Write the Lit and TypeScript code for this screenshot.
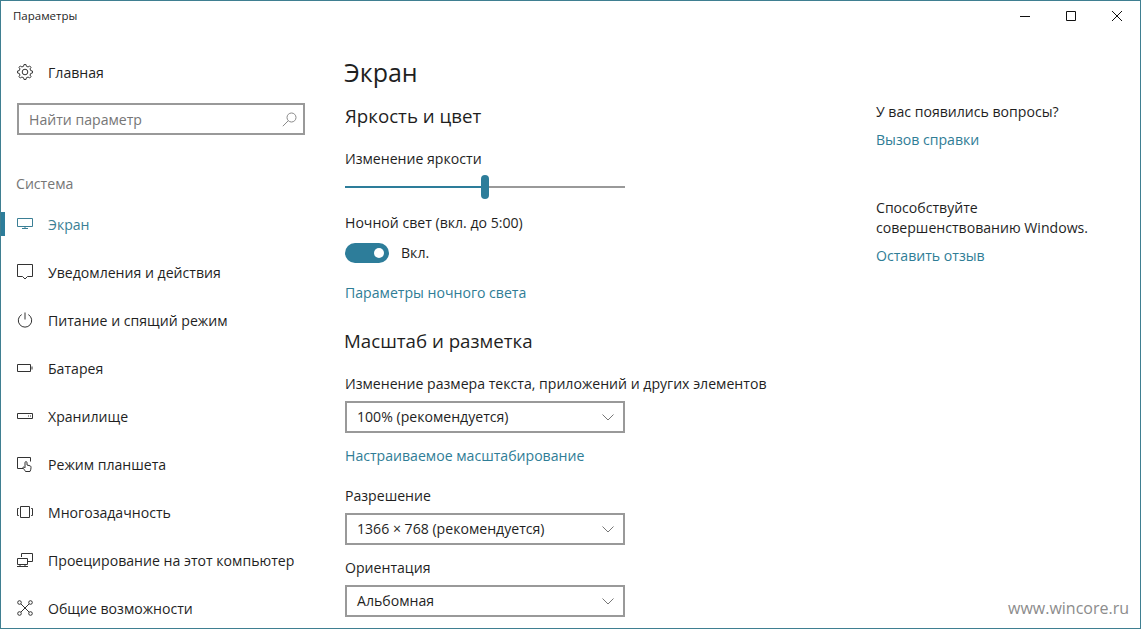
import { LitElement, html, css, svg } from "lit";
import { customElement } from "lit/decorators.js";

const ic = (content: unknown, cls = "") =>
  html`<svg class="icon ${cls}" viewBox="0 0 16 16" width="16" height="16">${content}</svg>`;

const gearPath = () => {
  const pts: string[] = [];
  const teeth = 8;
  for (let i = 0; i < teeth; i++) {
    const a = (i / teeth) * Math.PI * 2;
    const step = (Math.PI * 2) / teeth;
    const p = (r: number, t: number) =>
      `${(8 + r * Math.cos(t)).toFixed(2)} ${(8 + r * Math.sin(t)).toFixed(2)}`;
    pts.push(p(5.9, a - step * 0.3), p(7.6, a - step * 0.16), p(7.6, a + step * 0.16), p(5.9, a + step * 0.3));
  }
  return "M" + pts.join("L") + "Z";
};

const icons = {
  gear: svg`<path d=${gearPath()}/><circle cx="8" cy="8" r="2.8"/>`,
  display: svg`<path d="M.5 2.500h15v8H.5zM8 10.500v2M5 12.500h6"/>`,
  notify: svg`<path d="M.5 .5h15v12h-5l-2.500 2.500-2.500-2.500h-5z"/>`,
  power: svg`<path d="M4.700 2.600a6.700 6.700 0 1 0 6.600 0M8 .5v7"/>`,
  battery: svg`<path d="M.5 4.500h13v7H.5zM15 6.500v3"/>`,
  storage: svg`<path d="M.5 5.500h15v5H.5zM11 8h1M13 8h1"/>`,
  tablet: svg`<path d="M6 12.500H.5v-11h13v4M8.500 15.500c-1-2-2.500-3-2.500-4s1.300-.5 2 .3V6.700c0-1.500 2-1.500 2 0V9l3 .8c1 .3 1 1 1 2 0 1.500-.5 2.500-1 3.700z"/>`,
  multi: svg`<path d="M3.500 2.500h9v11h-9zM1.800 4.500H.5v7h1.300M14.200 4.500h1.300v7h-1.300"/>`,
  project: svg`<path d="M4.500 5V1.500h11v8H11M.5 6.500h10v6H.5zM0 14.500h11M3 12.500v2M8 12.500v2"/>`,
  access: svg`<circle cx="2.500" cy="2.500" r="1.800"/><circle cx="13.500" cy="2.500" r="1.800"/><circle cx="2.500" cy="13.500" r="1.800"/><circle cx="13.500" cy="13.500" r="1.800"/><path d="M4 4l8 8M12 4l-8 8"/>`,
};

const nav = [
  ["Экран", icons.display],
  ["Уведомления и действия", icons.notify],
  ["Питание и спящий режим", icons.power],
  ["Батарея", icons.battery],
  ["Хранилище", icons.storage],
  ["Режим планшета", icons.tablet],
  ["Многозадачность", icons.multi],
  ["Проецирование на этот компьютер", icons.project],
  ["Общие возможности", icons.access],
] as const;

@customElement("app-root")
export class AppRoot extends LitElement {
  static styles = css`
    :host {
      display: block;
      position: relative;
      width: 1141px;
      height: 629px;
      box-sizing: border-box;
      border: 1px solid #3f7f91;
      background: #fff;
      overflow: hidden;
      font-family: "Open Sans", "Noto Sans", sans-serif;
      font-size: 14.1px;
      color: #1f1f1f;
    }
    .titlebar {
      height: 30px;
      display: flex;
      align-items: center;
      justify-content: space-between;
      padding-left: 12px;
      font-size: 11.5px;
    }
    .title {
      padding-bottom: 2px;
    }
    .winbtns {
      display: flex;
    }
    .winbtn {
      width: 46px;
      height: 30px;
      display: flex;
      align-items: center;
      justify-content: center;
    }
    .winbtn svg {
      width: 10px;
      height: 10px;
      fill: none;
      stroke: #111;
      stroke-width: 1;
    }
    .body {
      display: flex;
    }
    .side {
      width: 343px;
      flex: none;
    }
    .icon {
      fill: none;
      stroke: #333;
      stroke-width: 1;
      flex: none;
    }
    .home {
      display: flex;
      align-items: center;
      gap: 15px;
      height: 20px;
      margin-top: 31px;
      padding-left: 16px;
      color: #1f1f1f;
    }
    .search {
      margin: 21px 0 0 16px;
      width: 288px;
      height: 32px;
      box-sizing: border-box;
      border: 2px solid #999;
      display: flex;
      align-items: center;
      justify-content: space-between;
      padding: 0 6px 0 10px;
      color: #767676;
    }
    .search svg {
      width: 15px;
      height: 15px;
      fill: none;
      stroke: #8a8a8a;
      stroke-width: 1;
    }
    .group {
      margin: 39px 0 0 15px;
      height: 20px;
      line-height: 20px;
      color: #767676;
    }
    .items {
      margin-top: 6px;
    }
    .item {
      height: 48px;
      display: flex;
      align-items: center;
      gap: 15px;
      padding-left: 16px;
      position: relative;
    }
    .item.active {
      color: #3b7f95;
    }
    .item.active .icon {
      stroke: #3b7f95;
    }
    .item.active::before {
      content: "";
      position: absolute;
      left: 0;
      top: 12px;
      width: 4px;
      height: 24px;
      background: #2d7d9a;
    }
    .main {
      width: 280px;
      flex: none;
      margin-left: 1px;
    }
    h1 {
      margin: 21px 0 0 -1px;
      font-size: 25px;
      font-weight: 400;
      line-height: 40px;
    }
    h2 {
      font-size: 18.7px;
      font-weight: 400;
      line-height: 28px;
      margin: 0;
      white-space: nowrap;
    }
    h2.scale {
      margin-left: -1px;
    }
    .label {
      line-height: 20px;
      height: 20px;
      white-space: nowrap;
    }
    .link {
      line-height: 20px;
      height: 20px;
      color: #2f7d96;
      white-space: nowrap;
    }
    .slider {
      height: 24px;
      margin-top: 6px;
      display: flex;
      align-items: center;
      position: relative;
    }
    .track {
      height: 2px;
    }
    .track.on {
      width: 140px;
      background: #2d7d9a;
    }
    .track.off {
      flex: 1;
      background: #999;
    }
    .thumb {
      position: absolute;
      left: 136px;
      top: 0;
      width: 8px;
      height: 24px;
      border-radius: 4px;
      background: #2d7d9a;
    }
    .toggle {
      display: flex;
      align-items: center;
      gap: 12px;
      height: 20px;
      margin-top: 10px;
    }
    .toggle span {
      padding-bottom: 2px;
    }
    .pill {
      width: 44px;
      height: 20px;
      border-radius: 10px;
      background: #2d7d9a;
      display: flex;
      align-items: center;
      justify-content: flex-end;
      padding-right: 5px;
      box-sizing: border-box;
    }
    .pill i {
      width: 10px;
      height: 10px;
      border-radius: 50%;
      background: #fff;
    }
    .select {
      margin-top: 7px;
      height: 32px;
      box-sizing: border-box;
      border: 2px solid #999;
      display: flex;
      align-items: center;
      justify-content: space-between;
      padding: 0 9px 2px 10px;
    }
    .select svg {
      width: 12px;
      height: 7px;
      fill: none;
      stroke: #777;
      stroke-width: 1;
      margin-top: 2px;
    }
    .mt10 { margin-top: 10px; }
    .mt13 { margin-top: 13px; }
    .mt14 { margin-top: 14px; }
    .mt19 { margin-top: 19px; }
    .mt20 { margin-top: 20px; }
    .mt24 { margin-top: 24px; }
    .aside {
      margin-left: 251px;
      padding-top: 71px;
      line-height: 20px;
      white-space: nowrap;
    }
    .aside .link { margin-top: 8px; }
    .aside .gap { margin-top: 48px; }
    .mark {
      position: absolute;
      right: 11px;
      bottom: 9px;
      font-size: 16px;
      color: #8c8c8c;
    }
  `;

  render() {
    return html`
      <div class="titlebar">
        <span class="title">Параметры</span>
        <div class="winbtns">
          <div class="winbtn"><svg viewBox="0 0 10 10"><path d="M0 5.500h10"/></svg></div>
          <div class="winbtn"><svg viewBox="0 0 10 10"><path d="M.5 .5h9v9h-9z"/></svg></div>
          <div class="winbtn"><svg viewBox="0 0 10 10"><path d="M0 0l10 10M10 0L0 10"/></svg></div>
        </div>
      </div>
      <div class="body">
        <div class="side">
          <div class="home">${ic(icons.gear)}<span>Главная</span></div>
          <div class="search">
            <span>Найти параметр</span>
            <svg viewBox="0 0 15 15"><circle cx="9.500" cy="5.500" r="4.500"/><path d="M6.300 8.700L.8 14.200"/></svg>
          </div>
          <div class="group">Система</div>
          <div class="items">
            ${nav.map(
              ([t, i], n) => html`<div class="item ${n === 0 ? "active" : ""}">${ic(i)}<span>${t}</span></div>`
            )}
          </div>
        </div>
        <div class="main">
          <h1>Экран</h1>
          <h2 class="mt10">Яркость и цвет</h2>
          <div class="label mt19">Изменение яркости</div>
          <div class="slider">
            <div class="track on"></div>
            <div class="track off"></div>
            <div class="thumb"></div>
          </div>
          <div class="label mt14">Ночной свет (вкл. до 5:00)</div>
          <div class="toggle"><div class="pill"><i></i></div><span>Вкл.</span></div>
          <div class="link mt20">Параметры ночного света</div>
          <h2 class="scale mt24">Масштаб и разметка</h2>
          <div class="label mt19">Изменение размера текста, приложений и других элементов</div>
          <div class="select">
            <span>100% (рекомендуется)</span>
            <svg viewBox="0 0 12 7"><path d="M.5 .5L6 6l5.500-5.500"/></svg>
          </div>
          <div class="link mt13">Настраиваемое масштабирование</div>
          <div class="label mt20">Разрешение</div>
          <div class="select">
            <span>1366 × 768 (рекомендуется)</span>
            <svg viewBox="0 0 12 7"><path d="M.5 .5L6 6l5.500-5.500"/></svg>
          </div>
          <div class="label mt13">Ориентация</div>
          <div class="select">
            <span>Альбомная</span>
            <svg viewBox="0 0 12 7"><path d="M.5 .5L6 6l5.500-5.500"/></svg>
          </div>
        </div>
        <div class="aside">
          <div>У вас появились вопросы?</div>
          <div class="link">Вызов справки</div>
          <div class="gap">Способствуйте</div>
          <div>совершенствованию Windows.</div>
          <div class="link">Оставить отзыв</div>
        </div>
      </div>
      <div class="mark">www.wincore.ru</div>
    `;
  }
}
